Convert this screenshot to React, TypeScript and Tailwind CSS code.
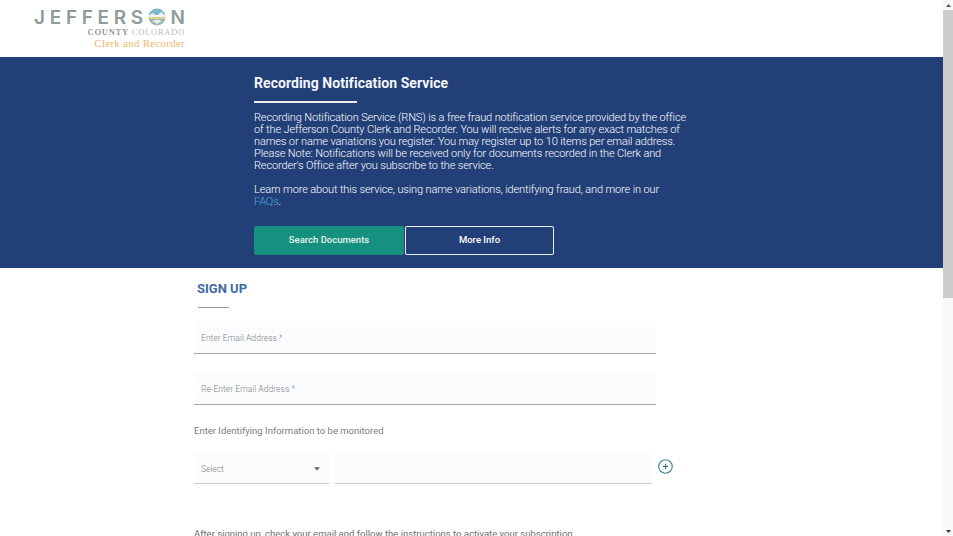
export default function App() {
  return (
    <div className="flex h-screen w-full overflow-hidden bg-white font-['Roboto',sans-serif]">
      <div className="flex-1 min-w-0 flex flex-col">
        <header className="h-[57px] shrink-0 pl-[34px] pt-[7px]">
          <div className="w-[151px] flex flex-col items-end">
            <div className="flex items-center h-[20px] w-full justify-between text-[#8f9b9a] text-[19px] font-semibold leading-none font-['Inter',sans-serif]">
              <span>J</span><span>E</span><span>F</span><span>F</span><span>E</span><span>R</span><span>S</span>
              <svg width="18" height="18" viewBox="0 0 18 18">
                <defs><clipPath id="c"><circle cx="9" cy="9" r="8.5" /></clipPath></defs>
                <g clipPath="url(#c)">
                  <rect width="18" height="7" fill="#7db6c6" />
                  <rect y="8" width="18" height="3" fill="#dcd48a" />
                  <rect y="11" width="18" height="7" fill="#9ab5ad" />
                  <path d="M0 8 L5 5 L9 8 L13 4 L18 8 V9 H0 Z" fill="#eef2ee" />
                  <path d="M4 13 L9 11.5 L14 13 L9 16 Z" fill="#e8ecea" />
                </g>
              </svg>
              <span>N</span>
            </div>
            <div className="text-[8.5px] leading-[10px] tracking-[0.75px] font-['Liberation_Serif',serif] text-[#b7bdbd]"><span className="font-bold text-[#8f9898]">COUNTY</span> COLORADO</div>
            <div className="text-[11px] leading-[13px] font-['Liberation_Serif',serif] text-[#f0b76a] tracking-[0.25px]">Clerk and Recorder</div>
          </div>
        </header>
        <section className="h-[211px] shrink-0 bg-[#223f78] pl-[254px] text-white">
          <h1 className="pt-[18px] text-[14px] leading-[17px] font-bold tracking-[0.07px] text-[#f4f6f9]">Recording Notification Service</h1>
          <div className="mt-[9px] h-[2px] w-[103px] bg-white/90" />
          <p className="mt-[9px] w-[433px] text-[11px] leading-[12px] tracking-[-0.13px] font-light text-white">Recording Notification Service (RNS) is a free fraud notification service provided by the office of the Jefferson County Clerk and Recorder. You will receive alerts for any exact matches of names or name variations you register. You may register up to 10 items per email address. Please Note: Notifications will be received only for documents recorded in the Clerk and Recorder's Office after you subscribe to the service.</p>
          <p className="mt-[12px] w-[425px] text-[11px] leading-[12px] tracking-[-0.13px] font-light text-white">Learn more about this service, using name variations, identifying fraud, and more in our <span className="text-[#4ba3dc]">FAQs</span>.</p>
          <div className="mt-[18px] flex gap-[1px]">
            <button className="h-[29px] w-[150px] rounded-[2px] bg-[#16917f] text-[9.5px] font-medium text-[#e6f2ef]">Search Documents</button>
            <button className="h-[29px] w-[149px] rounded-[2px] border border-white/90 bg-[#223f78] text-[9.5px] font-medium text-white">More Info</button>
          </div>
        </section>
        <main className="pl-[194px] w-[690px]">
          <h2 className="pl-[3px] pt-[12px] text-[13px] leading-[17px] font-bold text-[#3f6ba8]">SIGN UP</h2>
          <div className="ml-[4px] mt-[10px] h-[1px] w-[31px] bg-[#9a9a9a]" />
          <div className="mt-[13px] flex h-[33px] w-[462px] items-center border-b border-[#a8a8a8] bg-[#fafcfd] pl-[7px] pt-[2px] text-[8.5px] font-light tracking-[0.05px] text-[#808080]">Enter Email Address *</div>
          <div className="mt-[18px] flex h-[33px] w-[462px] items-center border-b border-[#a8a8a8] bg-[#fafcfd] pl-[7px] pt-[2px] text-[8.5px] font-light tracking-[0.05px] text-[#808080]">Re-Enter Email Address *</div>
          <p className="mt-[20px] text-[9.5px] leading-[12px] text-[#7d7d7d]">Enter Identifying Information to be monitored</p>
          <div className="mt-[15px] flex items-center">
            <div className="flex h-[32px] w-[135px] shrink-0 items-center justify-between border-b border-[#d0d0d0] bg-[#fafcfd] pl-[7px] pr-[9px] pt-[3px] text-[8.5px] font-light text-[#808080]">
              <span>Select</span>
              <svg width="6" height="4" viewBox="0 0 7 4"><path d="M0 0H7L3.5 4Z" fill="#666" /></svg>
            </div>
            <div className="ml-[6px] h-[32px] w-[317px] shrink-0 border-b border-[#d0d0d0] bg-[#fafcfd]" />
            <svg className="ml-[6px] mb-[3px] shrink-0" width="15" height="15" viewBox="0 0 14 14" fill="none">
              <circle cx="7" cy="7" r="6.3" stroke="#3f8f8f" strokeWidth="1.1" />
              <path d="M7 4.5V9.5M4.5 7H9.5" stroke="#3a6a6a" strokeWidth="1" />
            </svg>
          </div>
          <p className="mt-[44px] whitespace-nowrap text-[9.5px] leading-[12px] text-[#6f6f6f]">After signing up, check your email and follow the instructions to activate your subscription.</p>
        </main>
      </div>
      <aside className="w-[10px] shrink-0 flex flex-col bg-[#f8f8f8]">
        <div className="h-[10px] shrink-0 flex items-center justify-center">
          <svg width="5" height="3" viewBox="0 0 5 3"><path d="M0 3H5L2.5 0Z" fill="#555" /></svg>
        </div>
        <div className="h-[288px] shrink-0 bg-[#cdcdcd]" />
        <div className="flex-1" />
        <div className="h-[10px] shrink-0 flex items-center justify-center">
          <svg width="5" height="3" viewBox="0 0 5 3"><path d="M0 0H5L2.5 3Z" fill="#333" /></svg>
        </div>
      </aside>
    </div>
  );
}
